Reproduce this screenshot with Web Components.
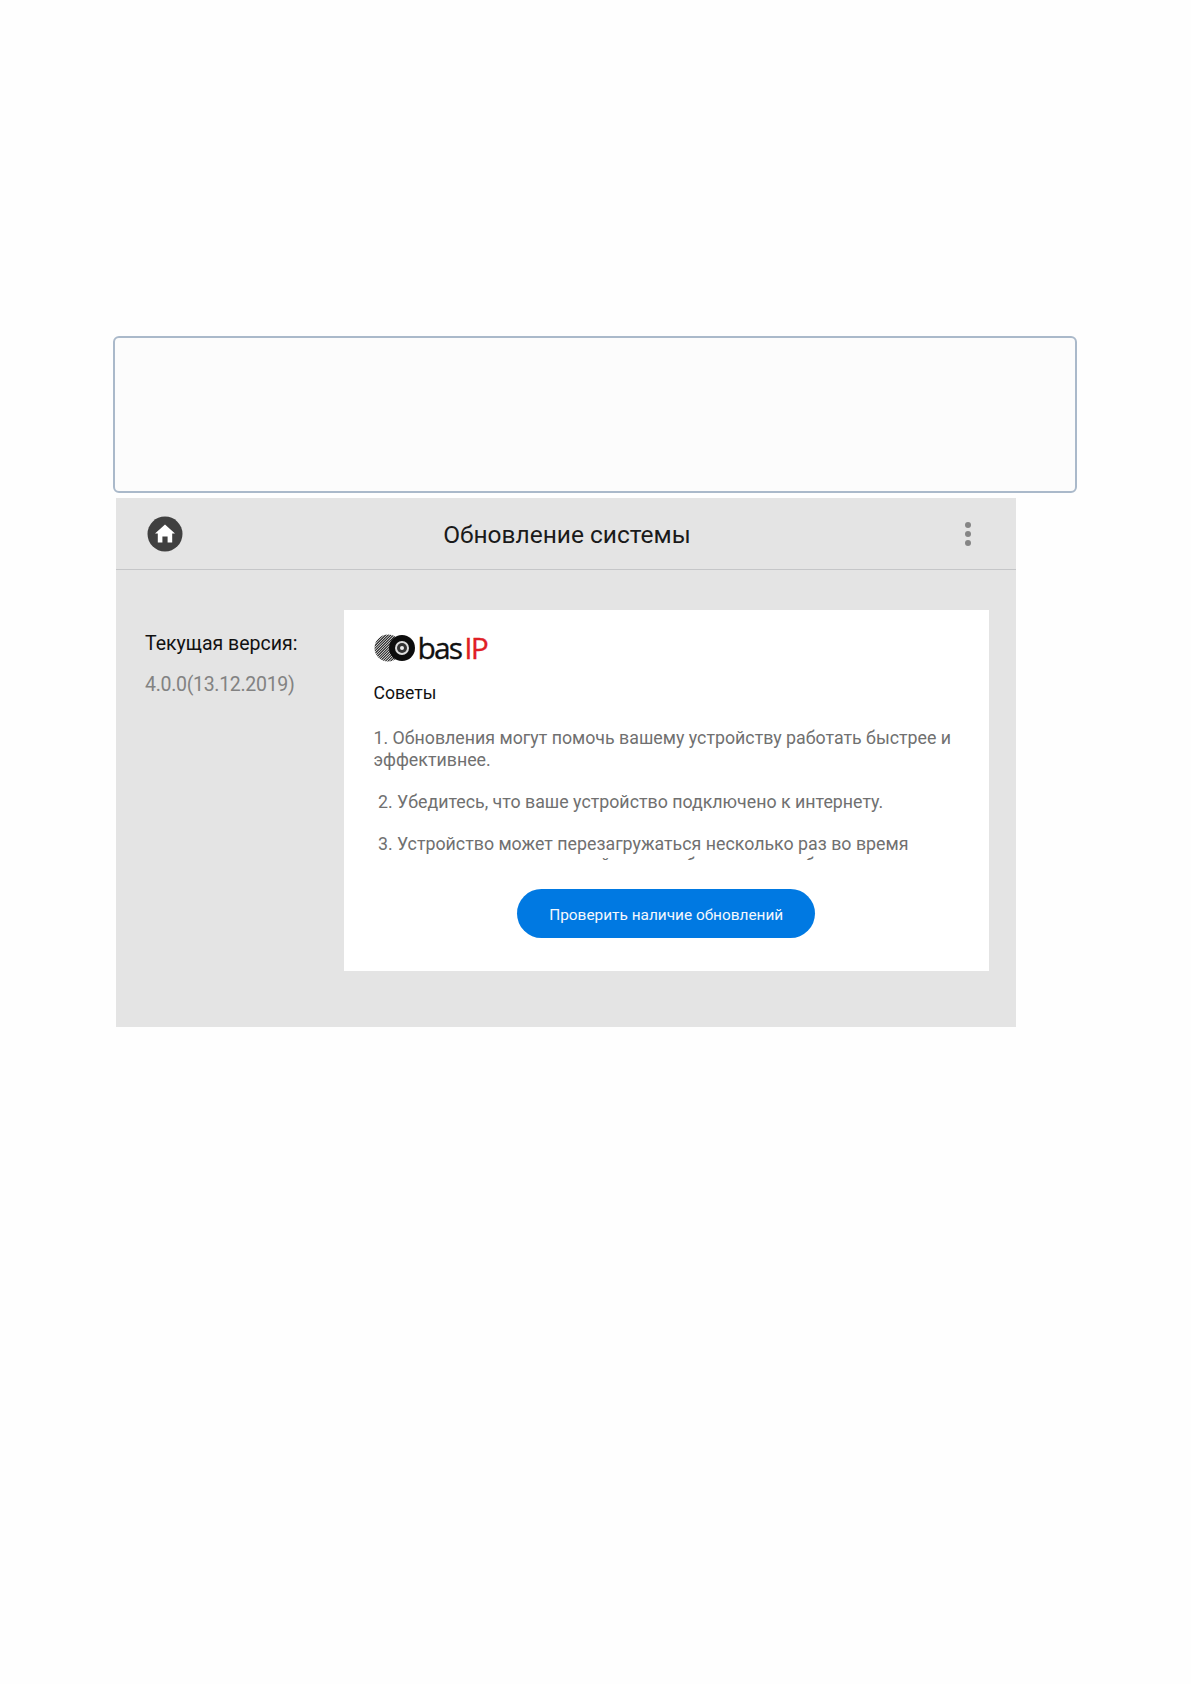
<!DOCTYPE html>
<html lang="ru">
<head>
<meta charset="utf-8">
<title>Обновление системы</title>
<style>
html, body { margin: 0; background: #fefefe; }
body { font-family: Roboto, "Liberation Sans", sans-serif; padding: 336px 0 0 113px; height: 1348px; overflow: hidden; }
</style>
</head>
<body>
<hint-box></hint-box>
<update-screen>
    <span slot="title">Обновление системы</span>
    <version-info slot="side" label="Текущая версия:" value="4.0.0(13.12.2019)"></version-info>
    <tips-card slot="main" heading="Советы">
        <p>1. Обновления могут помочь вашему устройству работать быстрее и эффективнее.</p>
        <p>&nbsp;2. Убедитесь, что ваше устройство подключено к интернету.</p>
        <p>&nbsp;3. Устройство может перезагружаться несколько раз во время<br>всего периода не выключайте экран без контроля, будут помехи.</p>
        <pill-button slot="action">Проверить наличие обновлений</pill-button>
    </tips-card>
</update-screen>

<script>
{
function shadow(el, html) { // open root with markup
    const r = el.attachShadow({ mode: 'open' });
    r.innerHTML = html;
    return r;
}

class HintBox extends HTMLElement {
    constructor() {
        super();
        shadow(this, `<style>
:host { display: block; box-sizing: border-box; width: 964px; height: 157px; background: #fcfcfc; border: 2px solid #aab9ca; border-radius: 6px; }
</style>`);
    }
}

class UpdateScreen extends HTMLElement {
    constructor() {
        super();
        shadow(this, `<style>
:host { display: block; width: 900px; height: 529px; margin: 5px 0 0 3px; background: #e4e4e4; }
header { box-sizing: border-box; height: 72px; border-bottom: 1px solid #c5c6c8; display: grid; grid-template-columns: 1fr auto 1fr; align-items: center; padding: 0 31px; }
.title { font-size: 24.5px; color: #1a1a1a; position: relative; top: 1px; left: 1px; }
.more { justify-self: end; display: block; margin-right: 13px; }
.body { display: grid; grid-template-columns: 228px 645px; padding: 40px 0 0 0; }
</style>
<header>
    <svg width="36" height="36" viewBox="0 0 36 36">
        <circle cx="18" cy="18" r="17.5" fill="#404040"/>
        <path d="M18 8.5 L28 17.6 L25.2 17.6 L25.2 26.4 L20.6 26.4 L20.6 20.6 L15.4 20.6 L15.4 26.4 L10.8 26.4 L10.8 17.6 L8 17.6 Z" fill="#fff"/>
    </svg>
    <div class="title"><slot name="title"></slot></div>
    <svg class="more" width="8" height="26" viewBox="0 0 8 26" fill="#858585">
        <circle cx="4" cy="4" r="3"/><circle cx="4" cy="13" r="3"/><circle cx="4" cy="22" r="3"/>
    </svg>
</header>
<div class="body">
    <slot name="side"></slot>
    <slot name="main"></slot>
</div>`);
    }
}

class VersionInfo extends HTMLElement {
    constructor() {
        super();
        shadow(this, `<style>
:host { display: block; padding: 22px 0 0 29px; }
div { font-size: 19.5px; line-height: 24px; color: #111; white-space: nowrap; }
.v { margin-top: 17px; font-size: 19.5px; color: #828282; letter-spacing: -0.3px; }
</style>
<div id="l"></div><div class="v" id="v"></div>`);
        this.shadowRoot.getElementById('l').textContent = this.getAttribute('label');
        this.shadowRoot.getElementById('v').textContent = this.getAttribute('value');
    }
}

class BasLogo extends HTMLElement {
    constructor() {
        super();
        let hatch = '';
        for (let i = -20; i < 20; i += 2.6) hatch += `<line x1="${i}" y1="30" x2="${i + 30}" y2="0"/>`;
        shadow(this, `<style>
:host { display: flex; align-items: center; height: 30px; }
svg { display: block; }
.t { font-family: "Open Sans", sans-serif; font-size: 30px; line-height: 30px; letter-spacing: -1.9px; margin-left: 2px; color: #111; -webkit-text-stroke: 0.3px #111; }
.ip { color: #e01f26; margin-left: 3px; letter-spacing: -1.8px; -webkit-text-stroke: 0.3px #e01f26; }
</style>
<svg width="42" height="28" viewBox="0 0 42 28">
    <defs><clipPath id="c"><circle cx="14" cy="14" r="13.5"/></clipPath></defs>
    <g clip-path="url(#c)" stroke="#222" stroke-width="1.1">${hatch}</g>
    <circle cx="28" cy="14" r="13" fill="#0d0d0d"/>
    <circle cx="28" cy="14" r="7" fill="#ddd"/>
    <circle cx="28" cy="14" r="5" fill="#333"/>
    <circle cx="28" cy="14" r="2" fill="#eee"/>
</svg>
<span class="t">bas<span class="ip">IP</span></span>`);
    }
}

class TipsCard extends HTMLElement {
    constructor() {
        super();
        shadow(this, `<style>
:host { display: block; box-sizing: border-box; width: 645px; height: 361px; background: #fff; padding: 23px 30px 0 29.5px; }
h2 { margin: 18px 0 0; font-size: 17.6px; line-height: 24px; font-weight: 400; color: #111; }
.scroll { height: 133px; margin-top: 22px; overflow: hidden; font-size: 17.8px; line-height: 21.5px; color: #707070; }
.act { display: flex; justify-content: center; margin-top: 29px; }
::slotted(p) { margin: 0 0 20.5px; }
</style>
<bas-logo></bas-logo>
<h2></h2>
<div class="scroll"><slot></slot></div>
<div class="act"><slot name="action"></slot></div>`);
        this.shadowRoot.querySelector('h2').textContent = this.getAttribute('heading');
    }
}

class PillButton extends HTMLElement {
    constructor() {
        super();
        shadow(this, `<style>
:host { display: flex; align-items: center; justify-content: center; box-sizing: border-box; width: 298px; height: 49px; padding-top: 2px; border-radius: 25px; background: #0079e2; color: #f4f8fd; font-size: 15.4px; cursor: pointer; }
</style><slot></slot>`);
    }
}

customElements.define('hint-box', HintBox);
customElements.define('update-screen', UpdateScreen);
customElements.define('version-info', VersionInfo);
customElements.define('bas-logo', BasLogo);
customElements.define('tips-card', TipsCard);
customElements.define('pill-button', PillButton);
}
</script>
</body>
</html>
